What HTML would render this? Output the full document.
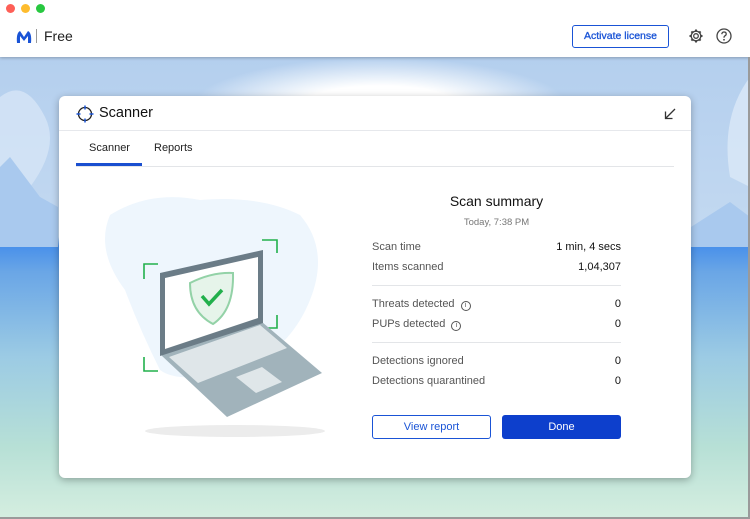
<!DOCTYPE html>
<html><head><style>
*{margin:0;padding:0;box-sizing:border-box}
body{width:750px;height:519px;overflow:hidden;font-family:"Liberation Sans",sans-serif;position:relative;background:#fff}
.bg{position:absolute;left:0;top:57px;width:750px;height:462px;background:linear-gradient(180deg,#b4cfee 0px,#c3d9f1 180px,#4a91ea 190px,#6aa6e6 215px,#9ccbe4 300px,#b7e0d6 390px,#d5eee0 462px)}
.glow{position:absolute;left:190px;top:0px;width:380px;height:100px;background:radial-gradient(ellipse at center,#fff 30%,rgba(255,255,255,0) 70%)}
.top{position:absolute;left:0;top:0;width:750px;height:57px;background:#fff;box-shadow:0 1px 3px rgba(0,0,0,.25);z-index:2}
.dot{position:absolute;top:4px;width:9px;height:9px;border-radius:50%}
.card{position:absolute;left:59px;top:96px;width:632px;height:382px;background:#fff;border-radius:6px;box-shadow:0 2px 8px rgba(0,0,0,.3)}
.t{position:absolute;white-space:nowrap}
.row{position:absolute;left:372px;width:249px;font-size:11px;color:#555}
.row b{position:absolute;right:0;font-weight:normal;color:#111}
.i{display:inline-block;width:10px;height:10px;border:1px solid #555;border-radius:50%;font-size:7px;text-align:center;line-height:8px;margin-left:6px;vertical-align:0}
</style></head><body>
<div class="bg"><div class="glow"></div>
<svg width="750" height="462" style="position:absolute;left:0;top:0">
<path d="M0 40 Q25 20 45 60 Q60 90 30 130 L0 140Z" fill="#d6e5f6" opacity=".8"/>
<path d="M0 110 L10 100 L40 140 L58 150 L58 190 L0 190Z" fill="#a9c9ee"/>
<path d="M750 20 Q720 60 730 120 L750 130Z" fill="#dbe8f7" opacity=".8"/>
<path d="M691 170 L730 145 L750 160 L750 190 L691 190Z" fill="#a9c9ee"/>
</svg></div>
<div class="top">
<div class="dot" style="left:6px;background:#fe5f57"></div>
<div class="dot" style="left:21px;background:#febc2e"></div>
<div class="dot" style="left:36px;background:#28c840"></div>
<svg width="16" height="14" style="position:absolute;left:16px;top:30px" viewBox="0 0 16 14"><path d="M1 13 Q0 3 4 1 L8 7 L12 1 Q16 3 15 13 L12 13 L12 6 L8 11 L4 6 L4 13Z" fill="#1a54d6"/></svg>
<div style="position:absolute;left:36px;top:29px;width:1px;height:14px;background:#999"></div>
<div class="t" style="left:44px;top:28px;font-size:14px;color:#222">Free</div>
<div style="position:absolute;left:572px;top:25px;width:97px;height:23px;border:1px solid #1a54d6;border-radius:3px;color:#1a54d6;font-size:10.5px;text-align:center;line-height:21px;-webkit-text-stroke:0.3px #1a54d6">Activate license</div>
<svg width="16" height="16" style="position:absolute;left:688px;top:28px" viewBox="0 0 16 16"><circle cx="8" cy="8" r="2.3" fill="none" stroke="#444" stroke-width="1.3"/><path d="M8 1.5v2M8 12.5v2M1.5 8h2M12.5 8h2M3.4 3.4l1.4 1.4M11.2 11.2l1.4 1.4M3.4 12.6l1.4-1.4M11.2 4.8l1.4-1.4" stroke="#444" stroke-width="2"/><circle cx="8" cy="8" r="4.8" fill="none" stroke="#444" stroke-width="1.3"/></svg>
<svg width="16" height="16" style="position:absolute;left:716px;top:28px" viewBox="0 0 16 16"><circle cx="8" cy="8" r="7" fill="none" stroke="#444" stroke-width="1.3"/><path d="M5.8 6.2Q6 4 8 4Q10.2 4 10.2 6Q10.2 7.3 8.6 8.1Q8 8.5 8 9.8" fill="none" stroke="#444" stroke-width="1.3"/><circle cx="8" cy="11.8" r=".9" fill="#444"/></svg>
</div>
<div class="card">
<svg width="18" height="18" style="position:absolute;left:17px;top:9px" viewBox="0 0 18 18"><circle cx="9" cy="9" r="6.5" fill="none" stroke="#222" stroke-width="1.3"/><path d="M9 0.5v4M9 13.5v4M0.5 9h4M13.5 9h4" stroke="#1a54d6" stroke-width="1.5"/></svg>
<div class="t" style="left:40px;top:9px;font-size:14.5px;color:#111">Scanner</div>
<svg width="12" height="12" style="position:absolute;left:605px;top:12px" viewBox="0 0 12 12"><path d="M11 1L2 10M1.5 3.5V10.5H8.5" fill="none" stroke="#333" stroke-width="1.3"/></svg>
<div style="position:absolute;left:0;top:34px;width:632px;height:1px;background:#e6e8ec"></div>
<div class="t" style="left:30px;top:46px;font-size:11px;color:#222">Scanner</div>
<div class="t" style="left:95px;top:46px;font-size:11px;color:#222">Reports</div>
<div style="position:absolute;left:17px;top:70px;width:598px;height:1px;background:#e3e5e8"></div>
<div style="position:absolute;left:17px;top:67px;width:66px;height:3px;background:#1a4fd0"></div>
</div>
<svg width="750" height="519" style="position:absolute;left:0;top:0;z-index:3;pointer-events:none">
<path d="M110 215 Q150 190 200 200 Q260 195 300 215 Q330 250 310 300 Q290 350 240 370 Q180 385 160 370 Q140 330 125 290 Q95 250 110 215Z" fill="#eef6fd"/>
<ellipse cx="235" cy="431" rx="90" ry="6" fill="#ececec"/>
<path d="M144 279V264H158M262 240H277V253M277 315V328H265M144 357V371H158" fill="none" stroke="#22b04c" stroke-width="1.6"/>
<path d="M161 355L262 322L322 373L227 417Z" fill="#a1b3bb"/>
<path d="M169 357L260 325L287 348L198 383Z" fill="#dfe6e9"/>
<path d="M236 377L262 367L282 382L256 393Z" fill="#dfe6e9"/>
<path d="M160 273L263 250L263 323L160 356Z" fill="#6b7c87"/>
<path d="M165 278L258 257L258 318L165 349Z" fill="#fff"/>
<path d="M190 283Q212 272 233 273Q234 310 213 324Q190 312 190 283Z" fill="#e6f4ea" stroke="#93d2a7" stroke-width="2"/>
<path d="M202 296L209 304L222 290" fill="none" stroke="#22b04c" stroke-width="3.5"/>
</svg>
<div style="position:absolute;left:0;top:0;z-index:4">
<div class="t" style="left:372px;top:193px;width:249px;text-align:center;font-size:14px;color:#111">Scan summary</div>
<div class="t" style="left:372px;top:217px;width:249px;text-align:center;font-size:9.5px;color:#777">Today, 7:38 PM</div>
<div class="row" style="top:241px">Scan time<b>1 min, 4 secs</b></div>
<div class="row" style="top:261px">Items scanned<b>1,04,307</b></div>
<div style="position:absolute;left:372px;top:285px;width:249px;height:1px;background:#e3e5e8"></div>
<div class="row" style="top:298px">Threats detected<span class="i">i</span><b>0</b></div>
<div class="row" style="top:318px">PUPs detected<span class="i">i</span><b>0</b></div>
<div style="position:absolute;left:372px;top:342px;width:249px;height:1px;background:#e3e5e8"></div>
<div class="row" style="top:355px">Detections ignored<b>0</b></div>
<div class="row" style="top:375px">Detections quarantined<b>0</b></div>
<div style="position:absolute;left:372px;top:415px;width:119px;height:24px;border:1px solid #1a54d6;border-radius:3px;color:#1a54d6;font-size:11px;text-align:center;line-height:22px;background:#fff">View report</div>
<div style="position:absolute;left:502px;top:415px;width:119px;height:24px;border-radius:3px;color:#fff;font-size:11px;text-align:center;line-height:24px;background:#0d3fcc">Done</div>
</div>
<div style="position:absolute;left:0;top:517px;width:750px;height:2px;background:#9a9a9a;z-index:5"></div>
<div style="position:absolute;left:748px;top:57px;width:2px;height:462px;background:#9a9a9a;z-index:5"></div>
</body></html>
